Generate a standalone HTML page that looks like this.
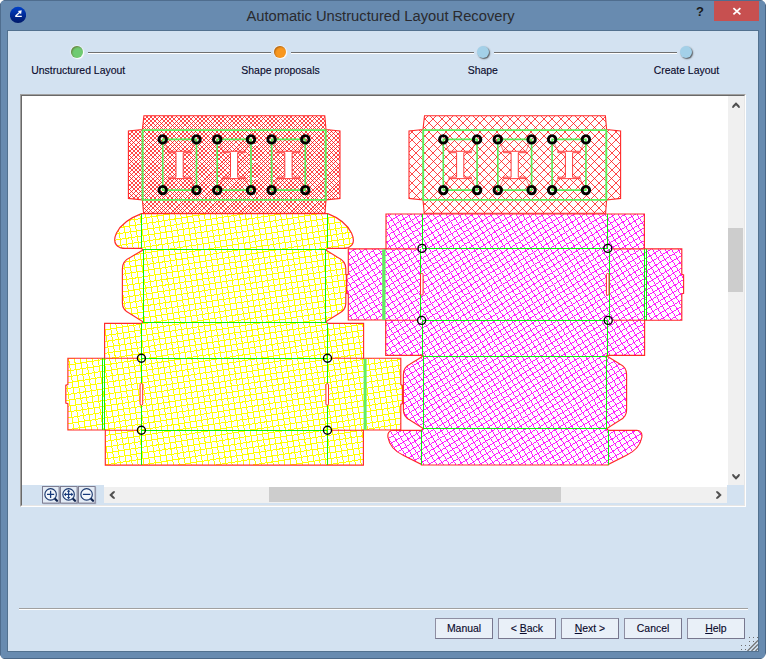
<!DOCTYPE html><html><head><meta charset="utf-8"><title>Automatic Unstructured Layout Recovery</title>
<style>
html,body{margin:0;padding:0}
body{width:766px;height:659px;position:relative;overflow:hidden;background:#688bb0;
 font-family:"Liberation Sans",sans-serif;font-size:12px;color:#10103a}
.abs{position:absolute}
#frame{left:0;top:0;width:764px;height:657px;border:1px solid #4f6d8e;border-right-color:#4a6787;border-bottom-color:#4a6787}
.cn{width:0;height:0;border-style:solid}
#title{left:246.4px;top:4px;height:24px;line-height:24px;font-size:14.72px;color:#2a2a2e;white-space:nowrap;letter-spacing:0}
#q{left:696px;top:3.5px;width:12px;font-size:13px;font-weight:bold;color:#1a1a1a;line-height:16px}
#close{left:714px;top:1px;width:45px;height:20px;background:#c75050}
#client{left:8px;top:31px;width:750px;height:620px;background:#d3e2f1;box-shadow:0 0 0 1px #52718f}
.dot{width:12px;height:12px;border-radius:50%}
.dw{box-shadow:0 0 1.5px 0.5px rgba(255,255,255,.9),1px 1px 1px rgba(255,255,255,.9),inset 1px 1px 1.5px rgba(90,40,0,.45)}
.dg{box-shadow:1px 1px 1.5px rgba(40,40,40,.75)}
.ln{height:1px;background:#707070;border-bottom:1px solid #fff}
.lbl{top:62px;height:16px;line-height:16px;white-space:nowrap;text-align:center;width:200px}
.lbl span,.btn span{display:inline-block;font-size:11.6px;color:#0a0a2c;-webkit-text-stroke:0.15px #0a0a2c;transform:scaleX(.9);transform-origin:50% 50%}
#panel{left:20px;top:94px;width:726px;height:413px;box-sizing:border-box;background:#d3e2f1;border-top:1px solid #a0a0a0;border-left:1px solid #a0a0a0;border-right:1px solid #fff;border-bottom:1px solid #fff}
#panel2{left:21px;top:95px;width:724px;height:411px;box-sizing:border-box;border-top:1px solid #696969;border-left:1px solid #696969;border-right:1px solid #e6e6e6;border-bottom:1px solid #e6e6e6}
#white{left:22px;top:96px;width:706px;height:391px;background:#fff}
#bl{left:22px;top:485px;width:82px;height:20px;background:#d3e2f1}
svg.cv{position:absolute;left:22px;top:96px}
#vs{left:728px;top:96px;width:16px;height:389px;background:#f0f0f0}
#vt{left:728px;top:228px;width:15px;height:64px;background:#cdcdcd}
#hs{left:104px;top:487px;width:623px;height:16px;background:#f0f0f0}
#ht{left:269px;top:487px;width:292px;height:15px;background:#cdcdcd}
#cr{left:727px;top:485px;width:17px;height:20px;background:#d3e2f1}
.zi{position:absolute;top:486px}
#sep{left:19px;top:608px;width:729px;height:1px;background:#a0a0a0;border-bottom:1px solid #fff}
.btn{top:618px;width:58px;height:21px;line-height:19px;box-sizing:border-box;background:#e9f0f8;border:1px solid #8e8ea2;border-right:1.5px solid #77778e;border-bottom:1.5px solid #77778e;text-align:center;font-size:12px;color:#10103a}
.btn span{display:inline-block;line-height:18px}
u{text-decoration:underline;text-underline-offset:1px}
</style></head><body>
<div id="frame" class="abs"></div>
<svg class="abs" style="left:0;top:0" width="766" height="659" viewBox="0 0 766 659"><path fill="#fff" d="M0 0H4Q1 1 0 4ZM766 0V5Q765 1 761 0ZM0 659V655Q1 658 4 659ZM766 659H761Q765 658 766 653Z"/></svg>
<svg class="abs" style="left:9px;top:6px" width="18" height="18" viewBox="0 0 18 18"><defs><linearGradient id="ig" x1="0" y1="0" x2="0" y2="1"><stop offset="0" stop-color="#0040c8"/><stop offset="1" stop-color="#001868"/></linearGradient><clipPath id="ic"><rect x="1" y="0" width="16" height="18"/></clipPath></defs><circle cx="9" cy="8.9" r="8.15" fill="url(#ig)" clip-path="url(#ic)"/><path d="M6.2 10.4H12.8M6.6 10L11.4 5.8" stroke="#fff" stroke-width="1.3" fill="none"/><path d="M12.7 4.3L8.8 5L12.1 8.2Z" fill="#fff"/></svg>
<div id="title" class="abs">Automatic Unstructured Layout Recovery</div>
<div id="q" class="abs">?</div>
<div id="close" class="abs"><svg width="45" height="20" viewBox="0 0 45 20"><path d="M19.4 7.1L26.4 13.3M26.4 7.1L19.4 13.3" stroke="#fff" stroke-width="1.8" fill="none"/></svg></div>
<div id="client" class="abs"></div>
<div class="abs dot dw" style="left:71.0px;top:46px;background:#6fcb72"></div>
<div class="abs ln" style="left:88px;top:52px;width:183px"></div>
<div class="abs lbl" id="l0" style="left:-22.2px"><span>Unstructured Layout</span></div>
<div class="abs dot dw" style="left:274.0px;top:46px;background:#f8971f"></div>
<div class="abs ln" style="left:291px;top:52px;width:183px"></div>
<div class="abs lbl" id="l1" style="left:180.3px"><span>Shape proposals</span></div>
<div class="abs dot dg" style="left:477.0px;top:46px;background:#a3d0e8"></div>
<div class="abs ln" style="left:494px;top:52px;width:183px"></div>
<div class="abs lbl" id="l2" style="left:383.2px"><span>Shape</span></div>
<div class="abs dot dg" style="left:680.0px;top:46px;background:#a3d0e8"></div>
<div class="abs lbl" id="l3" style="left:586.2px"><span>Create Layout</span></div>
<div id="panel" class="abs"></div><div id="panel2" class="abs"></div><div id="white" class="abs"></div><div id="bl" class="abs"></div><div id="cr" class="abs"></div>
<svg class="cv" width="706" height="390" viewBox="22 96 706 390">
<defs>
<clipPath id="rl"><path clip-rule="evenodd" d="M143.9 115.8L324.8 115.8L326 129.6L340 131L340 198.4L326 199.9L325 213.3L143.6 213.3L142.4 199.9L128.4 198.4L128.4 131L142.4 129.6ZM168.4 151.3L190.8 151.3L190.8 152.7L183.2 152.7L183.2 177.2L190.8 177.2L190.8 178.6L168.4 178.6L168.4 177.2L176 177.2L176 152.7L168.4 152.7ZM222.9 151.3L245.2 151.3L245.2 152.7L237.7 152.7L237.7 177.2L245.2 177.2L245.2 178.6L222.9 178.6L222.9 177.2L230.5 177.2L230.5 152.7L222.9 152.7ZM277.2 151.3L299.6 151.3L299.6 152.7L292.1 152.7L292.1 177.2L299.6 177.2L299.6 178.6L277.2 178.6L277.2 177.2L284.8 177.2L284.8 152.7L277.2 152.7Z"/></clipPath>
<clipPath id="rr"><path clip-rule="evenodd" d="M424.5 115.8L605.4 115.8L606.6 129.6L620.6 131L620.6 198.4L606.6 199.9L605.6 213.3L424.2 213.3L423 199.9L409 198.4L409 131L423 129.6ZM449 151.3L471.4 151.3L471.4 152.7L463.8 152.7L463.8 177.2L471.4 177.2L471.4 178.6L449 178.6L449 177.2L456.6 177.2L456.6 152.7L449 152.7ZM503.5 151.3L525.9 151.3L525.9 152.7L518.3 152.7L518.3 177.2L525.9 177.2L525.9 178.6L503.5 178.6L503.5 177.2L511.1 177.2L511.1 152.7L503.5 152.7ZM557.8 151.3L580.2 151.3L580.2 152.7L572.6 152.7L572.6 177.2L580.2 177.2L580.2 178.6L557.8 178.6L557.8 177.2L565.4 177.2L565.4 152.7L557.8 152.7Z"/></clipPath>
<clipPath id="cy"><path d="M141.5 213.6L327.7 213.6C338 217.5 347 224 351.5 233C354.5 239.5 354 245 348.5 247.6C346.5 248.4 344 248.4 341 248.4L327.7 248.4L325.7 250L337.5 257.2C342.5 259.5 345.8 263 345.8 268.5L345.8 274.4L346.8 275L346.8 293.2L345.8 293.8L345.8 303.5C345.8 308.5 343 311.5 338.5 313.8L325.7 321.8L327.5 323.4L363.6 323.4L363.6 358.2L400.8 358.2L400.8 384.6L402.4 385.4L402.4 403.6L400.8 404.4L400.8 430L363.4 430L363.4 465.1L105.3 465.1L105.3 430L67.9 430L67.9 403.6L65.8 403L65.8 385.2L67.9 384.6L67.9 358.2L104.6 358.2L104.6 323.4L141.5 323.4L143 321.8L130.2 313.8C125.5 311.5 122.4 308.5 122.4 303.5L122.4 268.5C122.4 263 125.5 259.5 130.6 257.2L143 250L141.5 248.4L127.5 248.4C124.5 248.4 122 248.4 120 247.6C114.5 245 113.5 239.5 116.5 233C121 224 131 217.5 141.5 213.6Z"/></clipPath>
<clipPath id="cm"><path d="M386 214L644.4 214L644.4 248.8L681.8 248.8L681.8 274.4L683.6 275L683.6 293.4L681.8 294L681.8 320.2L644.6 320.2L644.6 355.4L606.6 355.4L608 356.8L619.8 364C624.5 366.3 626.6 369.5 626.6 374.5L626.6 410C626.6 415 624.5 418 619.8 420.3L606.8 428.6L608.3 430.3L637 430.3C641 430.6 642.4 433.5 641.8 437.5C640.5 445 634.5 451.5 626 455.5L608.3 464.4L608.3 465L421.4 465L421.4 464.4L403.6 455.5C395 451.5 389.3 445 388 437.5C387.4 433.5 388.8 430.6 392.8 430.3L421.4 430.3L423.3 428.6L410.2 420.3C405.5 418 403.4 415 403.4 410L403.4 374.5C403.4 369.5 405.5 366.3 410.2 364L422 356.8L423.2 355.4L385.7 355.4L385.7 320L348.3 320L348.3 294L346.4 293.4L346.4 275L348.3 274.4L348.3 248.8L386 248.8Z"/></clipPath>
</defs>
<g clip-path="url(#cy)" stroke="#ffff00" stroke-width="1.0" fill="none" shape-rendering="crispEdges"><path d="M-14.8 155L413.6 87.2M-13.9 160.8L414.5 92.9M-13 166.5L415.5 98.6M-12.1 172.2L416.4 104.4M-11.2 177.9L417.3 110.1M-10.3 183.7L418.2 115.8M-9.4 189.4L419.1 121.5M-8.5 195.1L420 127.3M-7.6 200.9L420.9 133M-6.7 206.6L421.8 138.7M-5.7 212.3L422.7 144.5M-4.8 218L423.6 150.2M-3.9 223.8L424.5 155.9M-3 229.5L425.4 161.6M-2.1 235.2L426.3 167.4M-1.2 241L427.2 173.1M-0.3 246.7L428.2 178.8M0.6 252.4L429.1 184.6M1.5 258.1L430 190.3M2.4 263.9L430.9 196M3.3 269.6L431.8 201.7M4.2 275.3L432.7 207.5M5.1 281.1L433.6 213.2M6 286.8L434.5 218.9M7 292.5L435.4 224.7M7.9 298.2L436.3 230.4M8.8 304L437.2 236.1M9.7 309.7L438.1 241.8M10.6 315.4L439 247.6M11.5 321.2L440 253.3M12.4 326.9L440.9 259M13.3 332.6L441.8 264.8M14.2 338.3L442.7 270.5M15.1 344.1L443.6 276.2M16 349.8L444.5 281.9M16.9 355.5L445.4 287.7M17.8 361.3L446.3 293.4M18.7 367L447.2 299.1M19.7 372.7L448.1 304.9M20.6 378.4L449 310.6M21.5 384.2L449.9 316.3M22.4 389.9L450.8 322M23.3 395.6L451.7 327.8M24.2 401.4L452.7 333.5M25.1 407.1L453.6 339.2M26 412.8L454.5 345M26.9 418.5L455.4 350.7M27.8 424.3L456.3 356.4M28.7 430L457.2 362.1M29.6 435.7L458.1 367.9M30.5 441.5L459 373.6M31.5 447.2L459.9 379.3M32.4 452.9L460.8 385.1M33.3 458.6L461.7 390.8M34.2 464.4L462.6 396.5M35.1 470.1L463.5 402.2M36 475.8L464.4 408M36.9 481.6L465.4 413.7M37.8 487.3L466.3 419.4M38.7 493L467.2 425.2M39.6 498.7L468.1 430.9M40.5 504.5L469 436.6M41.4 510.2L469.9 442.3M42.3 515.9L470.8 448.1M43.2 521.7L471.7 453.8M44.2 527.4L472.6 459.5M45.1 533.1L473.5 465.3M46 538.8L474.4 471M46.9 544.6L475.3 476.7M47.8 550.3L476.2 482.4M48.7 556L477.2 488.2M49.6 561.8L478.1 493.9M50.5 567.5L479 499.6M51.4 573.2L479.9 505.4M52.3 578.9L480.8 511.1M53.2 584.7L481.7 516.8M54.1 590.4L482.6 522.5"/><path d="M419.5 90.5L487.4 519M413.8 91.4L481.7 519.9M408.1 92.3L475.9 520.8M402.3 93.2L470.2 521.7M396.6 94.1L464.5 522.6M390.9 95L458.7 523.5M385.2 96L453 524.4M379.4 96.9L447.3 525.3M373.7 97.8L441.6 526.2M368 98.7L435.8 527.1M362.2 99.6L430.1 528M356.5 100.5L424.4 529M350.8 101.4L418.6 529.9M345.1 102.3L412.9 530.8M339.3 103.2L407.2 531.7M333.6 104.1L401.5 532.6M327.9 105L395.7 533.5M322.1 105.9L390 534.4M316.4 106.8L384.3 535.3M310.7 107.8L378.5 536.2M305 108.7L372.8 537.1M299.2 109.6L367.1 538M293.5 110.5L361.4 538.9M287.8 111.4L355.6 539.8M282 112.3L349.9 540.7M276.3 113.2L344.2 541.7M270.6 114.1L338.4 542.6M264.9 115L332.7 543.5M259.1 115.9L327 544.4M253.4 116.8L321.3 545.3M247.7 117.7L315.5 546.2M241.9 118.6L309.8 547.1M236.2 119.5L304.1 548M230.5 120.5L298.3 548.9M224.8 121.4L292.6 549.8M219 122.3L286.9 550.7M213.3 123.2L281.2 551.6M207.6 124.1L275.4 552.5M201.8 125L269.7 553.4M196.1 125.9L264 554.4M190.4 126.8L258.2 555.3M184.7 127.7L252.5 556.2M178.9 128.6L246.8 557.1M173.2 129.5L241.1 558M167.5 130.4L235.3 558.9M161.7 131.3L229.6 559.8M156 132.2L223.9 560.7M150.3 133.2L218.1 561.6M144.6 134.1L212.4 562.5M138.8 135L206.7 563.4M133.1 135.9L201 564.3M127.4 136.8L195.2 565.2M121.6 137.7L189.5 566.2M115.9 138.6L183.8 567.1M110.2 139.5L178 568M104.5 140.4L172.3 568.9M98.7 141.3L166.6 569.8M93 142.2L160.9 570.7M87.3 143.1L155.1 571.6M81.5 144L149.4 572.5M75.8 145L143.7 573.4M70.1 145.9L137.9 574.3M64.4 146.8L132.2 575.2M58.6 147.7L126.5 576.1M52.9 148.6L120.8 577M47.2 149.5L115 577.9M41.4 150.4L109.3 578.9M35.7 151.3L103.6 579.8M30 152.2L97.8 580.7M24.3 153.1L92.1 581.6M18.5 154L86.4 582.5M12.8 154.9L80.7 583.4M7.1 155.8L74.9 584.3M1.3 156.7L69.2 585.2M-4.4 157.7L63.5 586.1M-10.1 158.6L57.7 587M-15.8 159.5L52 587.9"/></g>
<g clip-path="url(#cm)" stroke="#ff00ff" stroke-width="0.86" fill="none" shape-rendering="crispEdges"><path d="M214.5 267.1L581.7 37.7M217.3 271.7L584.6 42.3M220.2 276.3L587.4 46.8M223.1 280.9L590.3 51.4M225.9 285.4L593.1 56M228.8 290L596 60.6M231.7 294.6L598.9 65.2M234.5 299.2L601.7 69.7M237.4 303.8L604.6 74.3M240.2 308.3L607.4 78.9M243.1 312.9L610.3 83.5M246 317.5L613.2 88M248.8 322.1L616 92.6M251.7 326.7L618.9 97.2M254.5 331.2L621.8 101.8M257.4 335.8L624.6 106.4M260.3 340.4L627.5 110.9M263.1 345L630.3 115.5M266 349.6L633.2 120.1M268.9 354.1L636.1 124.7M271.7 358.7L638.9 129.3M274.6 363.3L641.8 133.8M277.4 367.9L644.6 138.4M280.3 372.5L647.5 143M283.2 377L650.4 147.6M286 381.6L653.2 152.2M288.9 386.2L656.1 156.7M291.7 390.8L659 161.3M294.6 395.4L661.8 165.9M297.5 399.9L664.7 170.5M300.3 404.5L667.5 175.1M303.2 409.1L670.4 179.6M306.1 413.7L673.3 184.2M308.9 418.3L676.1 188.8M311.8 422.8L679 193.4M314.6 427.4L681.8 198M317.5 432L684.7 202.5M320.4 436.6L687.6 207.1M323.2 441.2L690.4 211.7M326.1 445.7L693.3 216.3M328.9 450.3L696.2 220.9M331.8 454.9L699 225.4M334.7 459.5L701.9 230M337.5 464L704.7 234.6M340.4 468.6L707.6 239.2M343.3 473.2L710.5 243.8M346.1 477.8L713.3 248.3M349 482.4L716.2 252.9M351.8 486.9L719 257.5M354.7 491.5L721.9 262.1M357.6 496.1L724.8 266.6M360.4 500.7L727.6 271.2M363.3 505.3L730.5 275.8M366.1 509.8L733.4 280.4M369 514.4L736.2 285M371.9 519L739.1 289.5M374.7 523.6L741.9 294.1M377.6 528.2L744.8 298.7M380.5 532.7L747.7 303.3M383.3 537.3L750.5 307.9M386.2 541.9L753.4 312.4M389 546.5L756.2 317M391.9 551.1L759.1 321.6M394.8 555.6L762 326.2M397.6 560.2L764.8 330.8M400.5 564.8L767.7 335.3M403.3 569.4L770.6 339.9M406.2 574L773.4 344.5M409.1 578.5L776.3 349.1M411.9 583.1L779.1 353.7M414.8 587.7L782 358.2M417.7 592.3L784.9 362.8M420.5 596.9L787.7 367.4M423.4 601.4L790.6 372M426.2 606L793.4 376.6M429.1 610.6L796.3 381.1M432 615.2L799.2 385.7M434.8 619.7L802 390.3M437.7 624.3L804.9 394.9M440.5 628.9L807.8 399.5M443.4 633.5L810.6 404M446.3 638.1L813.5 408.6"/><path d="M585.5 40.2L814.9 407.4M580.9 43L810.3 410.2M576.3 45.9L805.8 413.1M571.7 48.8L801.2 416M567.1 51.6L796.6 418.8M562.6 54.5L792 421.7M558 57.4L787.4 424.6M553.4 60.2L782.9 427.4M548.8 63.1L778.3 430.3M544.2 65.9L773.7 433.1M539.7 68.8L769.1 436M535.1 71.7L764.5 438.9M530.5 74.5L760 441.7M525.9 77.4L755.4 444.6M521.3 80.2L750.8 447.4M516.8 83.1L746.2 450.3M512.2 86L741.6 453.2M507.6 88.8L737.1 456M503 91.7L732.5 458.9M498.4 94.6L727.9 461.8M493.9 97.4L723.3 464.6M489.3 100.3L718.7 467.5M484.7 103.1L714.2 470.3M480.1 106L709.6 473.2M475.5 108.9L705 476.1M471 111.7L700.4 478.9M466.4 114.6L695.8 481.8M461.8 117.4L691.3 484.7M457.2 120.3L686.7 487.5M452.7 123.2L682.1 490.4M448.1 126L677.5 493.2M443.5 128.9L672.9 496.1M438.9 131.8L668.4 499M434.3 134.6L663.8 501.8M429.8 137.5L659.2 504.7M425.2 140.3L654.6 507.5M420.6 143.2L650 510.4M416 146.1L645.5 513.3M411.4 148.9L640.9 516.1M406.9 151.8L636.3 519M402.3 154.6L631.7 521.9M397.7 157.5L627.2 524.7M393.1 160.4L622.6 527.6M388.5 163.2L618 530.4M384 166.1L613.4 533.3M379.4 169L608.8 536.2M374.8 171.8L604.3 539M370.2 174.7L599.7 541.9M365.6 177.5L595.1 544.7M361.1 180.4L590.5 547.6M356.5 183.3L585.9 550.5M351.9 186.1L581.4 553.3M347.3 189L576.8 556.2M342.7 191.8L572.2 559.1M338.2 194.7L567.6 561.9M333.6 197.6L563 564.8M329 200.4L558.5 567.6M324.4 203.3L553.9 570.5M319.8 206.2L549.3 573.4M315.3 209L544.7 576.2M310.7 211.9L540.1 579.1M306.1 214.7L535.6 581.9M301.5 217.6L531 584.8M296.9 220.5L526.4 587.7M292.4 223.3L521.8 590.5M287.8 226.2L517.2 593.4M283.2 229L512.7 596.3M278.6 231.9L508.1 599.1M274.1 234.8L503.5 602M269.5 237.6L498.9 604.8M264.9 240.5L494.3 607.7M260.3 243.4L489.8 610.6M255.7 246.2L485.2 613.4M251.2 249.1L480.6 616.3M246.6 251.9L476 619.1M242 254.8L471.5 622M237.4 257.7L466.9 624.9M232.8 260.5L462.3 627.7M228.3 263.4L457.7 630.6M223.7 266.2L453.1 633.5M219.1 269.1L448.6 636.3M214.5 272L444 639.2"/></g>
<g clip-path="url(#rl)" stroke="#ff0000" stroke-width="0.72" fill="none" shape-rendering="crispEdges"><path d="M235.4 -6.8L405.8 163.6M233.3 -4.7L403.7 165.7M231.2 -2.5L401.5 167.8M229.1 -0.4L399.4 169.9M226.9 1.7L397.3 172.1M224.8 3.8L395.2 174.2M222.7 6L393 176.3M220.6 8.1L390.9 178.4M218.4 10.2L388.8 180.6M216.3 12.3L386.7 182.7M214.2 14.5L384.5 184.8M212.1 16.6L382.4 186.9M209.9 18.7L380.3 189.1M207.8 20.8L378.2 191.2M205.7 23L376 193.3M203.6 25.1L373.9 195.4M201.5 27.2L371.8 197.5M199.3 29.3L369.7 199.7M197.2 31.5L367.5 201.8M195.1 33.6L365.4 203.9M193 35.7L363.3 206M190.8 37.8L361.2 208.2M188.7 40L359 210.3M186.6 42.1L356.9 212.4M184.5 44.2L354.8 214.5M182.3 46.3L352.7 216.7M180.2 48.5L350.5 218.8M178.1 50.6L348.4 220.9M176 52.7L346.3 223M173.8 54.8L344.2 225.2M171.7 57L342 227.3M169.6 59.1L339.9 229.4M167.5 61.2L337.8 231.5M165.3 63.3L335.7 233.7M163.2 65.5L333.5 235.8M161.1 67.6L331.4 237.9M159 69.7L329.3 240M156.8 71.8L327.2 242.2M154.7 74L325 244.3M152.6 76.1L322.9 246.4M150.5 78.2L320.8 248.5M148.3 80.3L318.7 250.7M146.2 82.5L316.5 252.8M144.1 84.6L314.4 254.9M142 86.7L312.3 257M139.8 88.8L310.2 259.2M137.7 91L308 261.3M135.6 93.1L305.9 263.4M133.5 95.2L303.8 265.5M131.3 97.3L301.7 267.7M129.2 99.5L299.5 269.8M127.1 101.6L297.4 271.9M125 103.7L295.3 274M122.8 105.8L293.2 276.2M120.7 108L291 278.3M118.6 110.1L288.9 280.4M116.5 112.2L286.8 282.5M114.3 114.3L284.7 284.7M112.2 116.5L282.5 286.8M110.1 118.6L280.4 288.9M108 120.7L278.3 291M105.8 122.8L276.2 293.2M103.7 125L274 295.3M101.6 127.1L271.9 297.4M99.5 129.2L269.8 299.5M97.3 131.3L267.7 301.7M95.2 133.5L265.5 303.8M93.1 135.6L263.4 305.9M91 137.7L261.3 308M88.8 139.8L259.2 310.2M86.7 142L257 312.3M84.6 144.1L254.9 314.4M82.5 146.2L252.8 316.5M80.3 148.3L250.7 318.7M78.2 150.5L248.5 320.8M76.1 152.6L246.4 322.9M74 154.7L244.3 325M71.8 156.8L242.2 327.2M69.7 159L240 329.3M67.6 161.1L237.9 331.4M65.5 163.2L235.8 333.5M63.3 165.3L233.7 335.7"/><path d="M404.9 164.6L234.6 334.9M402.8 162.4L232.4 332.8M400.6 160.3L230.3 330.6M398.5 158.2L228.2 328.5M396.4 156.1L226.1 326.4M394.3 153.9L223.9 324.3M392.2 151.8L221.8 322.2M390 149.7L219.7 320M387.9 147.6L217.6 317.9M385.8 145.4L215.4 315.8M383.7 143.3L213.3 313.7M381.5 141.2L211.2 311.5M379.4 139.1L209.1 309.4M377.3 136.9L206.9 307.3M375.2 134.8L204.8 305.2M373 132.7L202.7 303M370.9 130.6L200.6 300.9M368.8 128.4L198.4 298.8M366.7 126.3L196.3 296.7M364.5 124.2L194.2 294.5M362.4 122.1L192.1 292.4M360.3 119.9L189.9 290.3M358.2 117.8L187.8 288.2M356 115.7L185.7 286M353.9 113.6L183.6 283.9M351.8 111.4L181.4 281.8M349.7 109.3L179.3 279.7M347.5 107.2L177.2 277.5M345.4 105.1L175.1 275.4M343.3 102.9L172.9 273.3M341.2 100.8L170.8 271.2M339 98.7L168.7 269M336.9 96.6L166.6 266.9M334.8 94.4L164.4 264.8M332.7 92.3L162.3 262.7M330.5 90.2L160.2 260.5M328.4 88.1L158.1 258.4M326.3 85.9L155.9 256.3M324.2 83.8L153.8 254.2M322 81.7L151.7 252M319.9 79.6L149.6 249.9M317.8 77.4L147.4 247.8M315.7 75.3L145.3 245.7M313.5 73.2L143.2 243.5M311.4 71.1L141.1 241.4M309.3 68.9L138.9 239.3M307.2 66.8L136.8 237.2M305 64.7L134.7 235M302.9 62.6L132.6 232.9M300.8 60.4L130.4 230.8M298.7 58.3L128.3 228.7M296.5 56.2L126.2 226.5M294.4 54.1L124.1 224.4M292.3 51.9L121.9 222.3M290.2 49.8L119.8 220.2M288 47.7L117.7 218M285.9 45.6L115.6 215.9M283.8 43.4L113.4 213.8M281.7 41.3L111.3 211.7M279.5 39.2L109.2 209.5M277.4 37.1L107.1 207.4M275.3 34.9L104.9 205.3M273.2 32.8L102.8 203.2M271 30.7L100.7 201M268.9 28.6L98.6 198.9M266.8 26.4L96.4 196.8M264.7 24.3L94.3 194.7M262.5 22.2L92.2 192.5M260.4 20.1L90.1 190.4M258.3 17.9L87.9 188.3M256.2 15.8L85.8 186.2M254 13.7L83.7 184M251.9 11.6L81.6 181.9M249.8 9.4L79.4 179.8M247.7 7.3L77.3 177.7M245.5 5.2L75.2 175.5M243.4 3.1L73.1 173.4M241.3 0.9L70.9 171.3M239.2 -1.2L68.8 169.2M237 -3.3L66.7 167M234.9 -5.4L64.6 164.9M232.8 -7.6L62.4 162.8"/></g>
<g clip-path="url(#rr)" stroke="#ff0000" stroke-width="0.72" fill="none" shape-rendering="crispEdges"><path d="M516 -11L690.6 163.6M511.7 -6.7L686.3 167.9M507.5 -2.5L682.1 172.1M503.2 1.8L677.8 176.4M499 6L673.6 180.6M494.7 10.3L669.3 184.9M490.5 14.5L665.1 189.1M486.2 18.8L660.8 193.4M482 23L656.6 197.6M477.7 27.3L652.3 201.9M473.5 31.5L648.1 206.1M469.2 35.8L643.8 210.4M465 40L639.6 214.6M460.7 44.3L635.3 218.9M456.5 48.5L631.1 223.1M452.2 52.8L626.8 227.4M448 57L622.6 231.6M443.7 61.3L618.3 235.9M439.5 65.5L614.1 240.1M435.2 69.8L609.8 244.4M431 74L605.6 248.6M426.7 78.3L601.3 252.9M422.5 82.5L597.1 257.1M418.2 86.8L592.8 261.4M414 91L588.6 265.6M409.7 95.3L584.3 269.9M405.5 99.5L580.1 274.1M401.2 103.8L575.8 278.4M397 108L571.6 282.6M392.7 112.3L567.3 286.9M388.5 116.5L563.1 291.1M384.2 120.8L558.8 295.4M380 125L554.6 299.6M375.7 129.3L550.3 303.9M371.5 133.5L546.1 308.1M367.2 137.8L541.8 312.4M363 142L537.6 316.6M358.7 146.3L533.3 320.9M354.5 150.5L529.1 325.1M350.2 154.8L524.8 329.4M346 159L520.6 333.6M341.8 163.3L516.3 337.8M337.5 167.5L512.1 342.1"/><path d="M691.8 166.6L517.2 341.2M687.6 162.4L513 337M683.3 158.1L508.7 332.7M679.1 153.9L504.5 328.5M674.8 149.6L500.2 324.2M670.6 145.4L496 320M666.3 141.1L491.7 315.7M662.1 136.9L487.5 311.5M657.8 132.6L483.2 307.2M653.6 128.4L479 303M649.3 124.1L474.7 298.7M645.1 119.9L470.5 294.5M640.8 115.6L466.2 290.2M636.6 111.4L462 286M632.3 107.1L457.7 281.7M628.1 102.9L453.5 277.5M623.8 98.6L449.2 273.2M619.6 94.4L445 269M615.3 90.1L440.7 264.7M611.1 85.9L436.5 260.5M606.8 81.6L432.2 256.2M602.6 77.4L428 252M598.3 73.1L423.7 247.7M594.1 68.9L419.5 243.5M589.8 64.6L415.2 239.2M585.6 60.4L411 235M581.3 56.1L406.7 230.7M577.1 51.9L402.5 226.5M572.8 47.6L398.2 222.2M568.6 43.4L394 218M564.3 39.1L389.7 213.7M560.1 34.9L385.5 209.5M555.8 30.6L381.2 205.2M551.6 26.4L377 201M547.3 22.1L372.7 196.7M543.1 17.9L368.5 192.5M538.8 13.6L364.2 188.2M534.6 9.4L360 184M530.3 5.1L355.7 179.7M526.1 0.9L351.5 175.5M521.8 -3.4L347.2 171.2M517.6 -7.6L343 167M513.3 -11.9L338.7 162.7"/></g>
<g fill="none" stroke="#ff2a2a" stroke-width="1.15">
<path d="M141.5 213.6L327.7 213.6C338 217.5 347 224 351.5 233C354.5 239.5 354 245 348.5 247.6C346.5 248.4 344 248.4 341 248.4L327.7 248.4L325.7 250L337.5 257.2C342.5 259.5 345.8 263 345.8 268.5L345.8 274.4L346.8 275L346.8 293.2L345.8 293.8L345.8 303.5C345.8 308.5 343 311.5 338.5 313.8L325.7 321.8L327.5 323.4L363.6 323.4L363.6 358.2L400.8 358.2L400.8 384.6L402.4 385.4L402.4 403.6L400.8 404.4L400.8 430L363.4 430L363.4 465.1L105.3 465.1L105.3 430L67.9 430L67.9 403.6L65.8 403L65.8 385.2L67.9 384.6L67.9 358.2L104.6 358.2L104.6 323.4L141.5 323.4L143 321.8L130.2 313.8C125.5 311.5 122.4 308.5 122.4 303.5L122.4 268.5C122.4 263 125.5 259.5 130.6 257.2L143 250L141.5 248.4L127.5 248.4C124.5 248.4 122 248.4 120 247.6C114.5 245 113.5 239.5 116.5 233C121 224 131 217.5 141.5 213.6Z"/>
<path d="M386 214L644.4 214L644.4 248.8L681.8 248.8L681.8 274.4L683.6 275L683.6 293.4L681.8 294L681.8 320.2L644.6 320.2L644.6 355.4L606.6 355.4L608 356.8L619.8 364C624.5 366.3 626.6 369.5 626.6 374.5L626.6 410C626.6 415 624.5 418 619.8 420.3L606.8 428.6L608.3 430.3L637 430.3C641 430.6 642.4 433.5 641.8 437.5C640.5 445 634.5 451.5 626 455.5L608.3 464.4L608.3 465L421.4 465L421.4 464.4L403.6 455.5C395 451.5 389.3 445 388 437.5C387.4 433.5 388.8 430.6 392.8 430.3L421.4 430.3L423.3 428.6L410.2 420.3C405.5 418 403.4 415 403.4 410L403.4 374.5C403.4 369.5 405.5 366.3 410.2 364L422 356.8L423.2 355.4L385.7 355.4L385.7 320L348.3 320L348.3 294L346.4 293.4L346.4 275L348.3 274.4L348.3 248.8L386 248.8Z"/>
</g>
<path fill="none" stroke="#0cf00c" stroke-width="1" shape-rendering="crispEdges" d="M141.5 214L141.5 248.4M143.5 250L143.5 322M141.5 323.4L141.5 465M327.5 214L327.5 248.4M325.5 250L325.5 322M327.5 323.4L327.5 465M143 249.5L325.7 249.5M143 322.5L325.7 322.5M141.5 358.5L327.5 358.5M141.5 430.5L327.5 430.5M102.5 358.2L102.5 430M104.5 358.2L104.5 430M422.5 214L422.5 248.5M420.5 249L420.5 320M422.5 320.5L422.5 355.6M423.5 356.4L423.5 428.8M421.5 430.3L421.5 465M607.5 214L607.5 248.5M609.5 249L609.5 320M607.5 320.5L607.5 355.6M606.5 356.4L606.5 428.8M608.5 430.3L608.5 465M422 248.5L608 248.5M422 320.5L608 320.5M422.6 356.5L606.6 356.5M423.3 428.5L606.7 428.5M644.5 249L644.5 320M646.5 249L646.5 320"/>
<rect x="382.2" y="249.3" width="3.3" height="70.6" fill="#62ee62"/>
<rect x="363.6" y="358.8" width="3" height="71" fill="#62ee62"/>
<path fill="none" stroke="#ff2a2a" stroke-width="1.15" d="M104.6 358.2L137 358.2M105.3 430.2L137 430.2M332 358.2L363.6 358.2M332 430.2L363.4 430.2M386 248.8L417.5 248.8M385.7 320.2L417.5 320.2M612.5 248.8L644.4 248.8M612.5 320.2L644.6 320.2"/>
<rect x="140.1" y="383.6" width="2.6" height="21.6" rx="1.3" fill="#fff" stroke="#ff2a2a" stroke-width="1"/>
<rect x="325.9" y="383.6" width="2.6" height="21.6" rx="1.3" fill="#fff" stroke="#ff2a2a" stroke-width="1"/>
<rect x="420.5" y="273.4" width="2.6" height="21.8" rx="1.3" fill="#fff" stroke="#ff2a2a" stroke-width="1"/>
<rect x="606.4" y="273.4" width="2.6" height="21.8" rx="1.3" fill="#fff" stroke="#ff2a2a" stroke-width="1"/>
<g fill="none" stroke="#ff2a2a" stroke-width="1.1">
<path d="M143.9 115.8L324.8 115.8L326 129.6L340 131L340 198.4L326 199.9L325 213.3L143.6 213.3L142.4 199.9L128.4 198.4L128.4 131L142.4 129.6Z"/>
<path stroke-width=".9" d="M168.4 151.3L190.8 151.3L190.8 152.7L183.2 152.7L183.2 177.2L190.8 177.2L190.8 178.6L168.4 178.6L168.4 177.2L176 177.2L176 152.7L168.4 152.7Z"/>
<path stroke-width=".8" stroke-opacity=".75" d="M168.4 151.2L165 143.4M168.4 178.7L165 186.2M190.8 151.2L194.2 143.4M190.8 178.7L194.2 186.2"/>
<path stroke-width=".9" d="M222.9 151.3L245.2 151.3L245.2 152.7L237.7 152.7L237.7 177.2L245.2 177.2L245.2 178.6L222.9 178.6L222.9 177.2L230.5 177.2L230.5 152.7L222.9 152.7Z"/>
<path stroke-width=".8" stroke-opacity=".75" d="M222.9 151.2L219.5 143.4M222.9 178.7L219.5 186.2M245.2 151.2L248.7 143.4M245.2 178.7L248.7 186.2"/>
<path stroke-width=".9" d="M277.2 151.3L299.6 151.3L299.6 152.7L292.1 152.7L292.1 177.2L299.6 177.2L299.6 178.6L277.2 178.6L277.2 177.2L284.8 177.2L284.8 152.7L277.2 152.7Z"/>
<path stroke-width=".8" stroke-opacity=".75" d="M277.2 151.2L273.8 143.4M277.2 178.7L273.8 186.2M299.6 151.2L303.1 143.4M299.6 178.7L303.1 186.2"/>
</g>
<path fill="none" stroke="#58f058" stroke-width="1.9" d="M142.6 130.1H325.7V199.9H142.6Z"/>
<path fill="none" stroke="#55ee55" stroke-width="1.6" d="M162.7 139.4H196.5V190.1H162.7ZM217.2 139.4H251V190.1H217.2ZM271.6 139.4H305.3V190.1H271.6Z"/>
<g fill="none" stroke="#000" stroke-width="2.9">
<circle cx="162.7" cy="139.4" r="3.75"/>
<circle cx="162.7" cy="190.1" r="3.75"/>
<circle cx="196.5" cy="139.4" r="3.75"/>
<circle cx="196.5" cy="190.1" r="3.75"/>
<circle cx="217.2" cy="139.4" r="3.75"/>
<circle cx="217.2" cy="190.1" r="3.75"/>
<circle cx="251" cy="139.4" r="3.75"/>
<circle cx="251" cy="190.1" r="3.75"/>
<circle cx="271.6" cy="139.4" r="3.75"/>
<circle cx="271.6" cy="190.1" r="3.75"/>
<circle cx="305.3" cy="139.4" r="3.75"/>
<circle cx="305.3" cy="190.1" r="3.75"/>
</g>
<g fill="none" stroke="#ff2a2a" stroke-width="1.1">
<path d="M424.5 115.8L605.4 115.8L606.6 129.6L620.6 131L620.6 198.4L606.6 199.9L605.6 213.3L424.2 213.3L423 199.9L409 198.4L409 131L423 129.6Z"/>
<path stroke-width=".9" d="M449 151.3L471.4 151.3L471.4 152.7L463.8 152.7L463.8 177.2L471.4 177.2L471.4 178.6L449 178.6L449 177.2L456.6 177.2L456.6 152.7L449 152.7Z"/>
<path stroke-width=".8" stroke-opacity=".75" d="M449 151.2L445.6 143.4M449 178.7L445.6 186.2M471.4 151.2L474.8 143.4M471.4 178.7L474.8 186.2"/>
<path stroke-width=".9" d="M503.5 151.3L525.9 151.3L525.9 152.7L518.3 152.7L518.3 177.2L525.9 177.2L525.9 178.6L503.5 178.6L503.5 177.2L511.1 177.2L511.1 152.7L503.5 152.7Z"/>
<path stroke-width=".8" stroke-opacity=".75" d="M503.5 151.2L500.1 143.4M503.5 178.7L500.1 186.2M525.9 151.2L529.3 143.4M525.9 178.7L529.3 186.2"/>
<path stroke-width=".9" d="M557.8 151.3L580.2 151.3L580.2 152.7L572.6 152.7L572.6 177.2L580.2 177.2L580.2 178.6L557.8 178.6L557.8 177.2L565.4 177.2L565.4 152.7L557.8 152.7Z"/>
<path stroke-width=".8" stroke-opacity=".75" d="M557.8 151.2L554.4 143.4M557.8 178.7L554.4 186.2M580.2 151.2L583.6 143.4M580.2 178.7L583.6 186.2"/>
</g>
<path fill="none" stroke="#58f058" stroke-width="1.9" d="M423.2 130.1H606.3V199.9H423.2Z"/>
<path fill="none" stroke="#55ee55" stroke-width="1.6" d="M443.3 139.4H477.1V190.1H443.3ZM497.8 139.4H531.6V190.1H497.8ZM552.1 139.4H585.9V190.1H552.1Z"/>
<g fill="none" stroke="#000" stroke-width="2.9">
<circle cx="443.3" cy="139.4" r="3.75"/>
<circle cx="443.3" cy="190.1" r="3.75"/>
<circle cx="477.1" cy="139.4" r="3.75"/>
<circle cx="477.1" cy="190.1" r="3.75"/>
<circle cx="497.8" cy="139.4" r="3.75"/>
<circle cx="497.8" cy="190.1" r="3.75"/>
<circle cx="531.6" cy="139.4" r="3.75"/>
<circle cx="531.6" cy="190.1" r="3.75"/>
<circle cx="552.1" cy="139.4" r="3.75"/>
<circle cx="552.1" cy="190.1" r="3.75"/>
<circle cx="585.9" cy="139.4" r="3.75"/>
<circle cx="585.9" cy="190.1" r="3.75"/>
</g>
<g fill="none" stroke="#000" stroke-width="1.4">
<circle cx="141.4" cy="358.2" r="4"/>
<circle cx="141.4" cy="430.3" r="4"/>
<circle cx="327.5" cy="358.2" r="4"/>
<circle cx="327.5" cy="430.3" r="4"/>
<circle cx="422" cy="248.4" r="4"/>
<circle cx="421.6" cy="320.4" r="4"/>
<circle cx="607.8" cy="248.4" r="4"/>
<circle cx="608.2" cy="320.4" r="4"/>
</g>
</svg>
<div id="vs" class="abs"></div><div id="vt" class="abs"></div>
<div id="hs" class="abs"></div><div id="ht" class="abs"></div>
<svg class="abs" style="left:729.5px;top:99.1px" width="12" height="12" viewBox="-6 -6 12 12"><defs><clipPath id="acup"><rect x="-3.7" y="-2.9" width="7.4" height="6"/></clipPath></defs><g transform="rotate(180)"><path clip-path="url(#acup)" d="M-5.2 -4L0 1.2L5.2 -4" fill="none" stroke="#505050" stroke-width="2.1"/></g></svg>
<svg class="abs" style="left:729.5px;top:470.9px" width="12" height="12" viewBox="-6 -6 12 12"><defs><clipPath id="acdown"><rect x="-3.7" y="-2.9" width="7.4" height="6"/></clipPath></defs><g transform="rotate(0)"><path clip-path="url(#acdown)" d="M-5.2 -4L0 1.2L5.2 -4" fill="none" stroke="#505050" stroke-width="2.1"/></g></svg>
<svg class="abs" style="left:106.2px;top:488.5px" width="12" height="12" viewBox="-6 -6 12 12"><defs><clipPath id="acleft"><rect x="-3.7" y="-2.9" width="7.4" height="6"/></clipPath></defs><g transform="rotate(90)"><path clip-path="url(#acleft)" d="M-5.2 -4L0 1.2L5.2 -4" fill="none" stroke="#505050" stroke-width="2.1"/></g></svg>
<svg class="abs" style="left:713px;top:488.5px" width="12" height="12" viewBox="-6 -6 12 12"><defs><clipPath id="acright"><rect x="-3.7" y="-2.9" width="7.4" height="6"/></clipPath></defs><g transform="rotate(270)"><path clip-path="url(#acright)" d="M-5.2 -4L0 1.2L5.2 -4" fill="none" stroke="#505050" stroke-width="2.1"/></g></svg>
<svg class="zi" style="left:42px" width="19" height="19" viewBox="0 0 19 19"><rect x="1.2" y="1.2" width="17" height="17" fill="#8f8fa6" opacity=".55"/><rect x="0.5" y="0.5" width="16.6" height="16.6" fill="#e3ebf5" stroke="#7e7e92"/><line x1="13.2" y1="13" x2="15" y2="14.8" stroke="#10244f" stroke-width="2.3" stroke-linecap="round"/><circle cx="8.6" cy="8.4" r="5.75" fill="#f2f6fb" stroke="#1d3a70" stroke-width="1.15"/><path d="M5 8.4H12.2M8.6 4.8V12" stroke="#173a7c" stroke-width="1.25" fill="none"/></svg>
<svg class="zi" style="left:60px" width="19" height="19" viewBox="0 0 19 19"><rect x="1.2" y="1.2" width="17" height="17" fill="#8f8fa6" opacity=".55"/><rect x="0.5" y="0.5" width="16.6" height="16.6" fill="#e3ebf5" stroke="#7e7e92"/><line x1="13.2" y1="13" x2="15" y2="14.8" stroke="#10244f" stroke-width="2.3" stroke-linecap="round"/><circle cx="8.6" cy="8.4" r="5.75" fill="#f2f6fb" stroke="#1d3a70" stroke-width="1.15"/><path d="M5 8.4H12.2M8.6 4.8V12" stroke="#173a7c" stroke-width="1.1" fill="none"/><path d="M8.6 3.6L10.4 5.8H6.8ZM8.6 13.2L10.4 11H6.8ZM3.8 8.4L6 6.6V10.2ZM13.4 8.4L11.2 6.6V10.2Z" fill="#173a7c"/></svg>
<svg class="zi" style="left:78px" width="19" height="19" viewBox="0 0 19 19"><rect x="1.2" y="1.2" width="17" height="17" fill="#8f8fa6" opacity=".55"/><rect x="0.5" y="0.5" width="16.6" height="16.6" fill="#e3ebf5" stroke="#7e7e92"/><line x1="13.2" y1="13" x2="15" y2="14.8" stroke="#10244f" stroke-width="2.3" stroke-linecap="round"/><circle cx="8.6" cy="8.4" r="5.75" fill="#f2f6fb" stroke="#1d3a70" stroke-width="1.15"/><path d="M4.9 8.4H12.3" stroke="#173a7c" stroke-width="1.25" fill="none"/></svg>
<div id="sep" class="abs"></div>
<div class="abs btn" style="left:435px"><span>Manual</span></div>
<div class="abs btn" style="left:498px"><span>&lt; <u>B</u>ack</span></div>
<div class="abs btn" style="left:561px"><span><u>N</u>ext &gt;</span></div>
<div class="abs btn" style="left:624px"><span>Cancel</span></div>
<div class="abs btn" style="left:687px"><span><u>H</u>elp</span></div>
<svg class="abs" style="left:738px;top:634px" width="20" height="17" viewBox="0 0 20 17"><g fill="#6d6d6d"><rect x="11" y="3" width="1" height="1"/><rect x="15" y="3" width="1" height="1"/><rect x="19" y="3" width="1" height="1"/><rect x="11" y="7" width="1" height="1"/><rect x="15" y="7" width="1" height="1"/><rect x="3" y="11" width="1" height="1"/><rect x="7" y="11" width="1" height="1"/><rect x="11" y="11" width="1" height="1"/><rect x="3" y="15" width="1" height="1"/><rect x="7" y="15" width="1" height="1"/></g><path d="M9.5 17L20 6.5M13.5 17L20 10.5M17.5 17L20 14.5" stroke="#6d6d6d" stroke-width="1.2" fill="none"/></svg>
</body></html>
